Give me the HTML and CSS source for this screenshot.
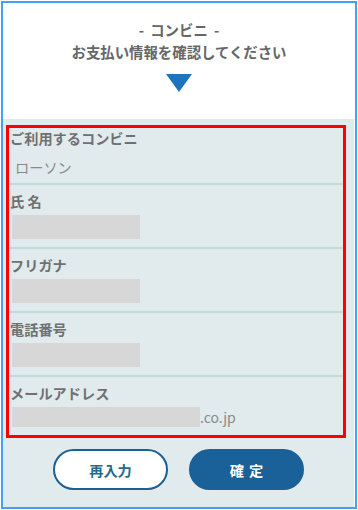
FILE: index.html
```html
<!DOCTYPE html>
<html lang="ja">
<head>
  <meta charset="UTF-8" />
  <meta name="viewport" content="width=device-width, initial-scale=1.0" />
  <title>お支払い情報の確認</title>
  <link rel="stylesheet" href="styles.css">
</head>
<body>
<div class="frame">
  <!-- Header -->
  <div class="head">
    <div class="head-title head-sub">- コンビニ -</div>
    <div class="head-title">お支払い情報を確認してください</div>
    <div class="arrow"></div>
  </div>

  <!-- Confirmation list -->
  <div class="panel">
    <ul class="confirm-list">
      <li class="row row-first">
        <div class="label">ご利用するコンビニ</div>
        <div class="value">ローソン</div>
      </li>
      <li class="row">
        <div class="label">氏 名</div>
        <div class="mask"></div>
      </li>
      <li class="row">
        <div class="label">フリガナ</div>
        <div class="mask"></div>
      </li>
      <li class="row">
        <div class="label">電話番号</div>
        <div class="mask"></div>
      </li>
      <li class="row row-last">
        <div class="label">メールアドレス</div>
        <div class="mail">
          <div class="mask mask-wide"></div>
          <span class="domain">.co.jp</span>
        </div>
      </li>
    </ul>

    <div class="actions">
      <button class="btn btn-back">再入力</button>
      <button class="btn btn-ok">確 定</button>
    </div>
  </div>
</div>
</body>
</html>
```

FILE: styles.css
```css
/* Base */
body {
  margin: 0;
  background: #ffffff;
  font-family: "Noto Sans CJK JP", "Liberation Sans", sans-serif;
  color: #6b6b6b;
}
.frame {
  margin: 1px;
  width: 352px;
  height: 504px;
  border: 2px solid #42a1f4;
  display: flex;
  flex-direction: column;
}

/* Header */
.head {
  background: #ffffff;
  padding: 16px 0 27px;
  display: flex;
  flex-direction: column;
  align-items: center;
}
.head-title {
  font-size: 14.4px;
  font-weight: bold;
  line-height: 22px;
  color: #666666;
}
.head-sub {
  word-spacing: 3px;
}
.arrow {
  margin-top: 11px;
  width: 0;
  height: 0;
  border-left: 13px solid transparent;
  border-right: 13px solid transparent;
  border-top: 18px solid #1f73bd;
}

/* Panel */
.panel {
  flex: 1;
  background: #e1ebee;
  margin-right: 1px;
  padding: 6px 8px 0 3px;
}
.confirm-list {
  list-style: none;
  margin: 0;
  padding: 0;
  border: 3px solid #ff0000;
}
.row {
  padding: 6px 0 8px 1px;
  border-bottom: 2px solid #c9d8df;
}
.row-first {
  padding-top: 0;
  padding-bottom: 6px;
}
.row-last {
  border-bottom: none;
  padding-bottom: 8px;
}
.label {
  font-size: 14.2px;
  font-weight: bold;
  line-height: 20px;
  color: #707070;
}
.value {
  margin-top: 9px;
  padding-left: 5px;
  font-size: 14.2px;
  line-height: 20px;
  color: #888888;
}
.mask {
  margin-top: 4px;
  margin-left: 2px;
  width: 128px;
  height: 24px;
  background: #d7d7d7;
}
.mail {
  display: flex;
  align-items: center;
  margin-top: 4px;
}
.mail .mask {
  margin-top: 0;
  width: 188px;
  height: 20px;
}
.domain {
  font-size: 14px;
  line-height: 20px;
  color: #8a8a8a;
}

/* Buttons */
.actions {
  display: flex;
  justify-content: center;
  gap: 21px;
  margin-top: 11px;
  padding-left: 5px;
}
.btn {
  width: 115px;
  height: 41px;
  border-radius: 21px;
  font-family: "Noto Sans CJK JP", sans-serif;
  font-size: 14.2px;
  font-weight: bold;
  cursor: pointer;
}
.btn-back {
  background: #ffffff;
  border: 2px solid #1a5f96;
  color: #1f6a8f;
}
.btn-ok {
  background: #1a6199;
  border: 2px solid #1a6199;
  color: #ffffff;
  word-spacing: 2px;
}
```
